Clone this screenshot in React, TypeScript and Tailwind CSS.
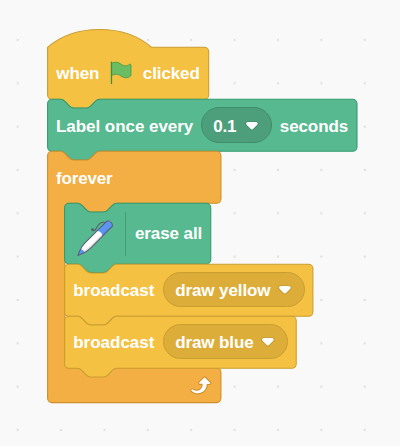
import type { ReactNode } from "react";

/** Pixels per workspace unit. */
const SCALE = 13 / 12;

const NOTCH = "c2 0 3 1 4 2l4 4c1 1 2 2 4 2h12c2 0 3-1 4-2l4-4c1-1 2-2 4-2";
const NOTCH_BACK = "c-2 0-3 1-4 2l-4 4c-1 1-2 2-4 2h-12c-2 0-3-1-4-2l-4-4c-1-1-2-2-4-2";

const stackPath = (w: number, h: number) =>
  `M0 4A4 4 0 0 1 4 0H12${NOTCH}H${w - 4}a4 4 0 0 1 4 4V${h - 4}a4 4 0 0 1-4 4H48${NOTCH_BACK}H4a4 4 0 0 1-4-4z`;

const hatPath = (w: number, h: number) =>
  `M0 0c25-22 71-22 96 0H${w - 4}a4 4 0 0 1 4 4V${h - 4}a4 4 0 0 1-4 4H48${NOTCH_BACK}H4a4 4 0 0 1-4-4z`;

const loopPath = (w: number, inner: number) =>
  `M0 4A4 4 0 0 1 4 0H12${NOTCH}H${w - 4}a4 4 0 0 1 4 4v40a4 4 0 0 1-4 4H64${NOTCH_BACK}h-8a4 4 0 0 0-4 4v${inner - 8}a4 4 0 0 0 4 4H${w - 4}a4 4 0 0 1 4 4v24a4 4 0 0 1-4 4H4a4 4 0 0 1-4-4z`;

function Shape({ d, className }: { d: string; className: string }) {
  return (
    <svg className="pointer-events-none absolute left-0 top-0 h-px w-px overflow-visible" aria-hidden="true">
      <path d={d} transform={`translate(0.6 0.3) scale(${SCALE})`} className={className} />
    </svg>
  );
}

const EVENT = "fill-[#f5c142] stroke-[#c99e30]";
const PEN = "fill-[#57b98f] stroke-[#329a71]";
const CONTROL = "fill-[#f3ae44] stroke-[#cf8f2b]";

function Caret() {
  return (
    <svg viewBox="0 0 12.71 8.79" className="mt-[1px] h-[9.5px] w-[13.8px] shrink-0">
      <path
        className="fill-[#231f20]/10"
        d="M12.71 2.44A2.41 2.41 0 0 1 12 4.16L8.08 8.08a2.45 2.45 0 0 1-3.45 0L.72 4.16A2.42 2.42 0 0 1 0 2.44 2.48 2.48 0 0 1 .71.71C1 .47 1.43 0 6.36 0S11.75.46 12 .71a2.44 2.44 0 0 1 .71 1.73z"
      />
      <path
        className="fill-white"
        d="M6.36 7.79a1.43 1.43 0 0 1-1-.42L1.42 3.45a1.44 1.44 0 0 1 0-2c.56-.56 9.31-.56 9.87 0a1.44 1.44 0 0 1 0 2L7.37 7.37a1.43 1.43 0 0 1-1.01.42z"
      />
    </svg>
  );
}

function Menu({ className, children }: { className: string; children: ReactNode }) {
  return (
    <div className={`flex h-[35.5px] shrink-0 items-center justify-between rounded-full border pl-[11.5px] pr-[12px] ${className}`}>
      {children}
      <Caret />
    </div>
  );
}

function Flag() {
  return (
    <svg viewBox="0 0 24 24" className="h-[26px] w-[26px] shrink-0">
      <path
        className="fill-[#6bbd63] stroke-[#4a9a45]"
        strokeWidth="0.8"
        strokeLinejoin="round"
        d="M3.2 3c2.9-1.5 6.4-1.2 8.9.9 2.4 1.9 5.5 1.9 7.9 0 .5-.3 1.2 0 1.2.6v9.6c0 .3-.1.5-.3.7-2.6 2.1-6.4 2.1-9-.1-2.4-1.9-5.9-2-8.7-.2z"
      />
      <path className="stroke-[#3f9140]" strokeWidth="1.2" strokeLinecap="round" d="M3.2 2v19.8" />
    </svg>
  );
}

function Pen() {
  return (
    <svg viewBox="0 0 40 40" className="h-[43.3px] w-[43.3px] shrink-0" fill="none" strokeLinecap="round" strokeLinejoin="round">
      <path
        className="fill-white"
        d="M8.753 34.602l-4.251 1.779 1.784-4.236c1.218-2.892 2.907-5.423 5.03-7.538L31.066 4.93c.846-.842 2.65-.41 4.032.967 1.38 1.375 1.816 3.173.97 4.015L16.318 29.59c-2.123 2.116-4.664 3.799-7.565 5.012"
      />
      <path className="stroke-[#575e75]" d="M29.41 6.111s-4.45-2.379-8.202 5.771c-1.2 2.1-2.4 1.9-3.2 1.2" />
      <path
        className="fill-[#5b96f7]"
        d="M36.42 8.825c0 .463-.14.873-.432 1.164l-9.335 9.301c.282-.29.41-.668.41-1.12 0-.874-.507-1.963-1.406-2.868-1.362-1.358-3.147-1.8-4.002-.99L30.99 5.01c.844-.84 2.65-.41 4.035.96.898.904 1.396 1.982 1.396 2.855M10.515 33.774a23.74 23.74 0 0 1-1.764.83L4.5 36.382l1.786-4.235c.258-.604.529-1.186.833-1.757.69.183 1.449.625 2.109 1.282.659.658 1.102 1.412 1.287 2.102"
      />
      <path className="stroke-[#575e75]/20" strokeWidth="1.4" d="M35.3 9.4L15.6 28.9c-1.900 1.900-4 3.300-6.500 4.400" />
      <path
        className="stroke-[#575e75]"
        d="M8.753 34.602l-4.251 1.779 1.784-4.236c1.218-2.892 2.907-5.423 5.03-7.538L31.066 4.93c.846-.842 2.65-.41 4.032.967 1.38 1.375 1.816 3.173.97 4.015L16.318 29.59c-2.123 2.116-4.664 3.799-7.565 5.012z"
      />
      <circle cx="18" cy="12.7" r="1.3" className="fill-[#575e75]" />
    </svg>
  );
}

function LoopArrow() {
  return (
    <svg viewBox="0 0 24 24" className="h-[26px] w-[26px]">
      <path
        className="fill-[#cf8f2b]"
        d="M23.3 11c-.3.6-.9 1-1.5 1h-1.6c-.1 1.3-.5 2.5-1.1 3.6-.9 1.7-2.3 3.2-4.1 4.1-1.7.9-3.6 1.2-5.5.9-1.8-.3-3.5-1.1-4.9-2.3-.7-.7-.7-1.9 0-2.6.6-.6 1.6-.7 2.3-.2H7c.9.6 1.9.9 2.9.9s1.9-.3 2.7-.9c1.1-.8 1.8-2.1 1.8-3.5h-1.5c-.9 0-1.7-.7-1.7-1.7 0-.4.2-.9.5-1.2l4.4-4.4c.7-.6 1.7-.6 2.4 0L23 9.2c.5.5.6 1.2.3 1.8z"
      />
      <path
        className="fill-white"
        d="M21.8 11h-2.6c0 1.5-.3 2.9-1 4.2-.8 1.6-2.1 2.8-3.7 3.6-1.5.8-3.3 1.1-4.9.8-1.6-.2-3.2-1-4.4-2.1-.4-.3-.4-.9-.1-1.2.3-.4.9-.4 1.2-.1 1 .7 2.2 1.1 3.4 1.1s2.3-.3 3.3-1c.9-.6 1.6-1.5 2-2.6.3-.9.4-1.8.2-2.8h-2.4c-.4 0-.7-.3-.7-.7 0-.2.1-.3.2-.4l4.4-4.4c.3-.3.7-.3.9 0L22 9.8c.3.3.4.6.3.9s-.3.3-.5.3z"
      />
    </svg>
  );
}

function BroadcastBlock({ units, menuClass, message }: { units: number; menuClass: string; message: string }) {
  return (
    <div className="relative h-[52px]">
      <Shape d={stackPath(units, 48)} className={EVENT} />
      <div className="relative flex h-full items-center pl-[9.2px]">
        <span className="w-[89.5px] pt-[2px]">broadcast</span>
        <Menu className={`border-[#c99e30] bg-[#ddad3a] ${menuClass}`}>
          <span className="pt-[2px] tracking-[-0.1px]">{message}</span>
        </Menu>
      </div>
    </div>
  );
}

export default function App() {
  return (
    <main className="relative h-[446px] w-[400px] overflow-hidden bg-[#f9f9f9] font-['Liberation_Sans',Arial,sans-serif] text-[17px] font-bold leading-5 whitespace-nowrap text-white">
      <svg className="absolute inset-0 h-full w-full" aria-hidden="true">
        <defs>
          <pattern id="grid" x="-4" y="18.4" width="43.38" height="43.33" patternUnits="userSpaceOnUse">
            <circle cx="21.7" cy="21.6" r="1.1" className="fill-[#dcdcdc]" />
          </pattern>
        </defs>
        <rect width="400" height="446" fill="url(#grid)" />
      </svg>

      <div className="relative pl-[47px] pt-[47px]">
        <div className="relative h-[52px]">
          <Shape d={hatPath(148.7, 48)} className={EVENT} />
          <div className="relative flex h-full items-center pl-[9.3px]">
            <span className="w-[51.7px] pt-[2px] tracking-[-0.1px]">when</span>
            <Flag />
            <span className="pl-[8.8px] pt-[2px] tracking-[-0.1px]">clicked</span>
          </div>
        </div>

        <div className="relative h-[52px]">
          <Shape d={stackPath(285.6, 48)} className={PEN} />
          <div className="relative flex h-full items-center pl-[9px]">
            <span className="w-[144.8px] pt-[3px] tracking-[-0.05px]">Label once every</span>
            <Menu className="w-[71px] border-[#3f8d69] bg-[#4c9f7a]">
              <span className="pt-[3px] tracking-[-0.2px]">0.1</span>
            </Menu>
            <span className="pl-[8px] pt-[3px] tracking-[-0.1px]">seconds</span>
          </div>
        </div>

        <div className="relative">
          <Shape d={loopPath(160, 152)} className={CONTROL} />
          <div className="relative flex h-[52px] items-center pl-[9px] pt-[3px] tracking-[-0.15px]">forever</div>

          <div className="relative pl-[17px]">
            <div className="relative h-[60.67px]">
              <Shape d={stackPath(134.9, 56)} className={PEN} />
              <div className="relative flex h-full items-center pl-[8.7px]">
                <div className="pt-[8px]">
                  <Pen />
                </div>
                <div className="mt-[1px] ml-[8.7px] h-[44px] w-px bg-[#429c76]" />
                <span className="pl-[9.3px] pt-[2px] tracking-[-0.1px]">erase all</span>
              </div>
            </div>
            <BroadcastBlock units={229.2} menuClass="w-[142px]" message="draw yellow" />
            <BroadcastBlock units={213.8} menuClass="w-[125.5px]" message="draw blue" />
          </div>

          <div className="relative flex h-[34.67px] w-[173.3px] items-center justify-end pr-[8px]">
            <LoopArrow />
          </div>
        </div>
      </div>
    </main>
  );
}
